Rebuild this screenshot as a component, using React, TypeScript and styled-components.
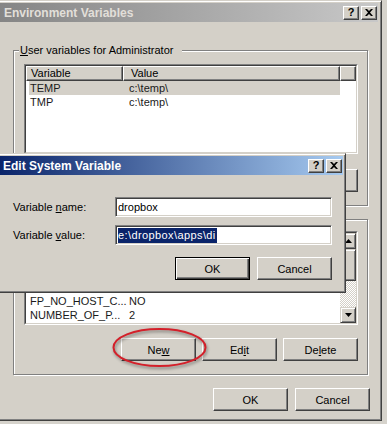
import React from 'react';
import styled, { createGlobalStyle, css } from 'styled-components';

const FACE = '#d4d0c8';
const SHADOW = '#808080';
const DARK = '#404040';

const GlobalStyle = createGlobalStyle`
  html, body {
    margin: 0;
    padding: 0;
  }
  body {
    background: #d6d3cc;
    font-family: "Liberation Sans", Arial, sans-serif;
    font-size: 11px;
    color: #000;
    overflow: hidden;
  }
`;

const Screen = styled.div`
  position: relative;
  width: 387px;
  height: 424px;
  overflow: hidden;
  background: #d6d3cc;
`;

const Window = styled.div`
  box-sizing: border-box;
  width: 382px;
  height: 421px;
  display: flex;
  flex-direction: column;
  padding: 2px 3px 0 0;
  background: ${FACE};
  border-top: 1px solid ${FACE};
  border-right: 1px solid ${DARK};
  border-bottom: 1px solid ${DARK};
  box-shadow: inset 0 1px #fff, inset -1px -1px ${SHADOW};
`;

const TitleBar = styled.div<{ $active?: boolean }>`
  flex: none;
  height: 19px;
  display: flex;
  align-items: center;
  padding: 0 1px 0 4px;
  background: ${p =>
    p.$active
      ? 'linear-gradient(to right, #0a246a, #a6caf0)'
      : 'linear-gradient(to right, #858585, #c8c8c8)'};
  color: ${p => (p.$active ? '#fff' : '#e2dfd9')};
  font-size: 12px;
  font-weight: bold;
`;

const TitleText = styled.span`
  flex: 1;
  white-space: nowrap;
`;

const CaptionButtons = styled.div`
  display: flex;
  gap: 2px;
`;

const CaptionButton = styled.div`
  box-sizing: border-box;
  width: 16px;
  height: 14px;
  display: flex;
  align-items: center;
  justify-content: center;
  background: ${FACE};
  border: 1px solid;
  border-color: #fff ${DARK} ${DARK} #fff;
  box-shadow: inset -1px -1px ${SHADOW};
  color: #000;
  font-size: 11px;
  font-weight: bold;
  line-height: 1;
`;

const Content = styled.div`
  flex: 1;
  display: flex;
  flex-direction: column;
  padding: 28px 10px 0 13px;
`;

const GroupBox = styled.div<{ $padTop: number; $gapTop?: number }>`
  position: relative;
  margin-top: ${p => p.$gapTop ?? 0}px;
  padding: ${p => p.$padTop}px 9px 13px 10px;
  border: 1px solid ${SHADOW};
  box-shadow: 1px 1px 0 #fff, inset 1px 1px 0 #fff;
`;

const Legend = styled.span`
  position: absolute;
  top: -8px;
  left: 5px;
  padding: 0 9px 0 1px;
  line-height: 14px;
  background: ${FACE};
  white-space: nowrap;
`;

const ListView = styled.div<{ $height: number }>`
  box-sizing: border-box;
  height: ${p => p.$height}px;
  display: flex;
  border: 1px solid;
  border-color: ${SHADOW} #fff #fff ${SHADOW};
`;

const ListWell = styled.div`
  flex: 1;
  min-width: 0;
  display: flex;
  background: #fff;
  border: 1px solid;
  border-color: ${DARK} ${FACE} ${FACE} ${DARK};
  overflow: hidden;
`;

const ListPane = styled.div`
  flex: 1;
  min-width: 0;
  overflow: hidden;
`;

const HeaderRow = styled.div`
  display: flex;
  height: 15px;
`;

const HeaderCell = styled.div<{ $width?: number; $pad?: number }>`
  box-sizing: border-box;
  flex: ${p => (p.$width ? `0 0 ${p.$width}px` : '1')};
  padding-left: ${p => p.$pad ?? 0}px;
  line-height: 13px;
  background: ${FACE};
  border: 1px solid;
  border-color: #fff ${DARK} ${DARK} #fff;
  box-shadow: inset -1px -1px ${SHADOW};
  white-space: nowrap;
  overflow: hidden;
`;

const Rows = styled.div<{ $offset?: number }>`
  padding-top: ${p => p.$offset ?? 0}px;
`;

const Row = styled.div<{ $selected?: boolean }>`
  display: flex;
  width: 311px;
  height: 14px;
  margin-left: 3px;
  line-height: 14px;
  background: ${p => (p.$selected ? FACE : 'transparent')};
`;

const Cell = styled.div<{ $width?: number }>`
  flex: ${p => (p.$width ? `0 0 ${p.$width}px` : '1')};
  box-sizing: border-box;
  padding-left: ${p => (p.$width ? 1 : 0)}px;
  color: #1a1a1a;
  white-space: nowrap;
  overflow: hidden;
`;

const ScrollBar = styled.div`
  flex: 0 0 16px;
  display: flex;
  flex-direction: column;
  background: repeating-conic-gradient(#fff 0 25%, ${FACE} 0 50%) 0 0 / 2px 2px;
`;

const ScrollPart = styled.div<{ $size: number }>`
  box-sizing: border-box;
  flex: 0 0 ${p => p.$size}px;
  display: flex;
  align-items: center;
  justify-content: center;
  background: ${FACE};
  border: 1px solid;
  border-color: ${FACE} ${DARK} ${DARK} ${FACE};
  box-shadow: inset 1px 1px #fff, inset -1px -1px ${SHADOW};
`;

const Track = styled.div`
  flex: 1;
`;

const ButtonRow = styled.div<{ $top: number; $gap: number; $right?: number }>`
  display: flex;
  justify-content: flex-end;
  gap: ${p => p.$gap}px;
  margin-top: ${p => p.$top}px;
  margin-right: ${p => p.$right ?? 0}px;
`;

const PushButton = styled.button<{ $default?: boolean }>`
  box-sizing: border-box;
  width: 75px;
  height: 23px;
  margin: 0;
  padding: 0;
  font: inherit;
  color: #000;
  background: ${FACE};
  border: 1px solid;
  border-color: #fff ${DARK} ${DARK} #fff;
  box-shadow: inset -1px -1px ${SHADOW};
  ${p =>
    p.$default &&
    css`
      border-color: #000;
      box-shadow: inset 1px 1px #fff, inset -1px -1px ${DARK}, inset -2px -2px ${SHADOW};
    `}
`;

const Dialog = styled.div`
  position: absolute;
  left: -4px;
  top: 153px;
  width: 350px;
  box-sizing: border-box;
  padding: 2px;
  background: ${FACE};
  border: 1px solid;
  border-color: ${FACE} ${DARK} ${DARK} ${FACE};
  box-shadow: inset 1px 1px #fff, inset -1px -1px ${SHADOW};
`;

const DialogBody = styled.div`
  padding: 22px 11px 10px 14px;
`;

const FieldGrid = styled.div`
  display: grid;
  grid-template-columns: 102px 1fr;
  grid-auto-rows: 20px;
  row-gap: 8px;
  align-items: center;
`;

const FieldLabel = styled.label`
  white-space: nowrap;
`;

const TextBox = styled.div`
  box-sizing: border-box;
  height: 20px;
  display: flex;
  align-items: center;
  padding-left: 2px;
  background: #fff;
  border: 1px solid;
  border-color: ${SHADOW} #fff #fff ${SHADOW};
  box-shadow: inset 1px 1px ${DARK}, inset -1px -1px ${FACE};
  white-space: nowrap;
  overflow: hidden;
`;

const Selection = styled.span`
  line-height: 15px;
  padding-right: 1px;
  letter-spacing: 0.4px;
  background: #0a246a;
  color: #fff;
`;

const Annotation = styled.svg`
  position: absolute;
  left: 108px;
  top: 324px;
  overflow: visible;
  filter: drop-shadow(1px 2px 1.5px rgba(0, 0, 0, 0.4));
  pointer-events: none;
`;

const CloseGlyph = () => (
  <svg width="8" height="7" viewBox="0 0 8 7">
    <path d="M0 0h2l2 2 2-2h2L5 3.5 8 7H6L4 5 2 7H0l3-3.5z" fill="#000" />
  </svg>
);

const Arrow = ({ down }: { down?: boolean }) => (
  <svg width="7" height="4" viewBox="0 0 7 4">
    <path d={down ? 'M0 0h7L3.5 4z' : 'M3.5 0 7 4H0z'} fill="#000" />
  </svg>
);

const Caption = ({ title, active }: { title: string; active?: boolean }) => (
  <TitleBar $active={active}>
    <TitleText>{title}</TitleText>
    <CaptionButtons>
      <CaptionButton>?</CaptionButton>
      <CaptionButton>
        <CloseGlyph />
      </CaptionButton>
    </CaptionButtons>
  </TitleBar>
);

const ListHeader = () => (
  <HeaderRow>
    <HeaderCell $width={97} $pad={4}>Variable</HeaderCell>
    <HeaderCell $width={217} $pad={7}>Value</HeaderCell>
    <HeaderCell />
  </HeaderRow>
);

const userVars = [
  { name: 'TEMP', value: 'c:\\temp\\', selected: true },
  { name: 'TMP', value: 'c:\\temp\\' },
];

const systemVars = [
  { name: 'CLASSPATH', value: '.;' },
  { name: 'ComSpec', value: 'C:\\WINDOWS\\system32\\cmd.exe' },
  { name: 'FP_NO_HOST_C...', value: 'NO' },
  { name: 'NUMBER_OF_P...', value: '2' },
  { name: 'OS', value: 'Windows_NT' },
];

export default function App() {
  return (
    <Screen>
      <GlobalStyle />
      <Window>
        <Caption title="Environment Variables" />
        <Content>
          <GroupBox $padTop={13}>
            <Legend>
              <u>U</u>ser variables for Administrator
            </Legend>
            <ListView $height={90}>
              <ListWell>
                <ListPane>
                  <ListHeader />
                  <Rows>
                    {userVars.map(v => (
                      <Row key={v.name} $selected={v.selected}>
                        <Cell $width={100}>{v.name}</Cell>
                        <Cell>{v.value}</Cell>
                      </Row>
                    ))}
                  </Rows>
                </ListPane>
              </ListWell>
            </ListView>
            <ButtonRow $top={15} $gap={6}>
              <PushButton>
                Ne<u>w</u>
              </PushButton>
              <PushButton>
                <u>E</u>dit
              </PushButton>
              <PushButton>
                <u>D</u>elete
              </PushButton>
            </ButtonRow>
          </GroupBox>

          <GroupBox $padTop={11} $gapTop={13}>
            <Legend>
              <u>S</u>ystem variables
            </Legend>
            <ListView $height={94}>
              <ListWell>
                <ListPane>
                  <ListHeader />
                  <Rows $offset={18}>
                    {systemVars.map(v => (
                      <Row key={v.name}>
                        <Cell $width={100}>{v.name}</Cell>
                        <Cell>{v.value}</Cell>
                      </Row>
                    ))}
                  </Rows>
                </ListPane>
                <ScrollBar>
                  <ScrollPart $size={16}>
                    <Arrow />
                  </ScrollPart>
                  <ScrollPart $size={32} />
                  <Track />
                  <ScrollPart $size={16}>
                    <Arrow down />
                  </ScrollPart>
                </ScrollBar>
              </ListWell>
            </ListView>
            <ButtonRow $top={13} $gap={6}>
              <PushButton>
                Ne<u>w</u>
              </PushButton>
              <PushButton>
                Ed<u>i</u>t
              </PushButton>
              <PushButton>
                De<u>l</u>ete
              </PushButton>
            </ButtonRow>
          </GroupBox>

          <ButtonRow $top={13} $gap={7} $right={-2}>
            <PushButton>OK</PushButton>
            <PushButton>Cancel</PushButton>
          </ButtonRow>
        </Content>
      </Window>

      <Dialog>
        <Caption title="Edit System Variable" active />
        <DialogBody>
          <FieldGrid>
            <FieldLabel>
              Variable <u>n</u>ame:
            </FieldLabel>
            <TextBox>dropbox</TextBox>
            <FieldLabel>
              Variable <u>v</u>alue:
            </FieldLabel>
            <TextBox>
              <Selection>e:\dropbox\apps\di</Selection>
            </TextBox>
          </FieldGrid>
          <ButtonRow $top={12} $gap={7}>
            <PushButton $default>OK</PushButton>
            <PushButton>Cancel</PushButton>
          </ButtonRow>
        </DialogBody>
      </Dialog>

      <Annotation width="104" height="48" viewBox="0 0 104 48">
        <ellipse cx="51.5" cy="23.5" rx="46" ry="18.5" fill="none" stroke="#d3202a" strokeWidth="2" />
      </Annotation>
    </Screen>
  );
}
